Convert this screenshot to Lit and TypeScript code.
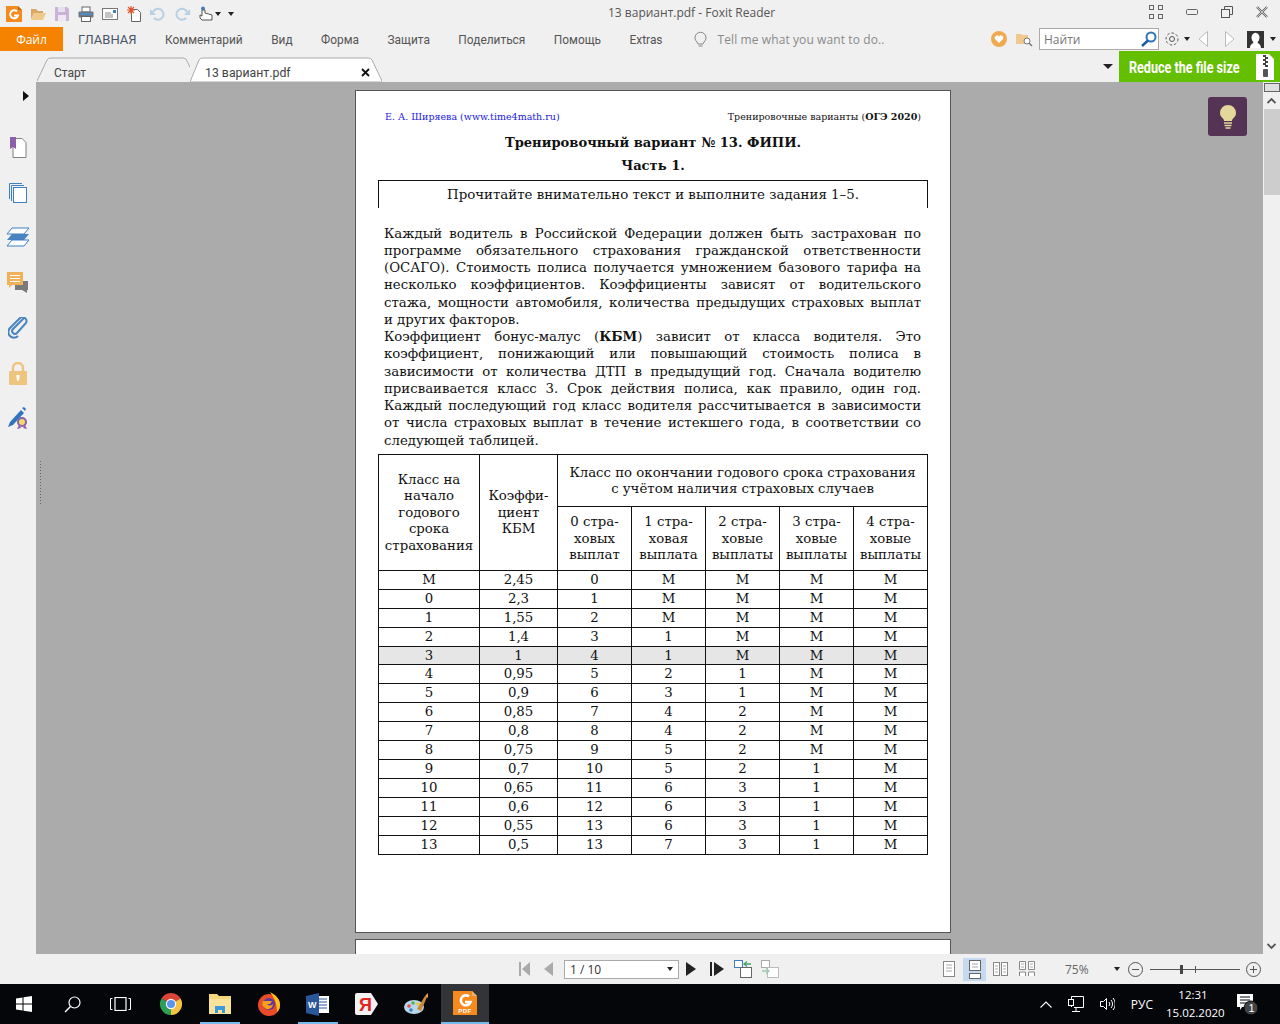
import { LitElement, html, css, svg } from 'lit';
import { customElement } from 'lit/decorators.js';

const icon = (w: number, h: number, body: unknown, cls = '') => html`<svg class="ic ${cls}" width=${w} height=${h} viewBox="0 0 ${w} ${h}">${body}</svg>`;

const foxitSmall = icon(16, 16, svg`
  <rect width="16" height="16" fill="#f58a1f"/>
  <path d="M12 0h4v4z" fill="#fff"/><path d="M12 0l4 4h-4z" fill="#b86a1a"/>
  <path d="M11 5.5a4 4 0 1 0 1 4H8" fill="none" stroke="#fff" stroke-width="2"/>`);

const foxitPdf = html`<svg class="ic" width="24" height="24" viewBox="0 0 24 24">
  <rect width="24" height="24" fill="#f58a1f"/>
  <path d="M19 0h5v5z" fill="#333438"/><path d="M19 0l5 5h-5z" fill="#e8b27a"/>
  <path d="M16 5.5a5 5 0 1 0 1.5 5.500H12" fill="none" stroke="#fff" stroke-width="2.6"/>
  <text x="12" y="22" text-anchor="middle" font-size="6" font-weight="700" fill="#fff" font-family="Liberation Sans" letter-spacing=".5">PDF</text>
</svg>`;

const qat = [
  foxitSmall,
  icon(16, 16, svg`<path d="M1 3h5l2 2h5v2H4L1 13z" fill="#d9a866"/><path d="M4 7h12l-3 7H1z" fill="#f0c98c"/>`),
  icon(16, 16, svg`<path d="M1 1h12l2 2v12H1z" fill="#c9b3d6"/><rect x="4" y="1" width="7" height="5" fill="#e8dff0"/><rect x="4" y="9" width="8" height="6" fill="#efe8f4"/>`),
  icon(16, 16, svg`<rect x="4" y="1" width="8" height="5" fill="#fff" stroke="#666"/><rect x="0.5" y="5.5" width="15" height="6" rx="1" fill="#6f7780"/><rect x="2" y="7" width="12" height="2" fill="#4f8bc4"/><rect x="3.5" y="10.5" width="9" height="5" fill="#fff" stroke="#666"/>`),
  icon(16, 16, svg`<rect x="0.5" y="2.5" width="15" height="11" fill="#fff" stroke="#777"/><rect x="11" y="4" width="3" height="3" fill="#3f7fbf"/><path d="M3 7h6M3 9h8M3 11h8" stroke="#888"/>`),
  icon(16, 16, svg`<path d="M5.5 3.5h6l3 3v9h-9z" fill="#fff" stroke="#666"/><path d="M5 0v8M1 4h8M2 1l6 6M8 1L2 7" stroke="#e2542b" stroke-width="1.2"/>`),
  icon(16, 16, svg`<path d="M4 12a5.5 5.5 0 1 0 -1-6" fill="none" stroke="#b9cfe2" stroke-width="2"/><path d="M0 3v6h6z" fill="#b9cfe2"/>`),
  icon(16, 16, svg`<path d="M12 12a5.5 5.5 0 1 1 1-6" fill="none" stroke="#b9cfe2" stroke-width="2"/><path d="M16 3v6h-6z" fill="#b9cfe2"/>`),
  icon(16, 16, svg`<circle cx="5" cy="2.5" r="2" fill="#3f7fbf"/><path d="M4 4v6L2 9v3l2 2h10v-5l-7-2V4z" fill="#fff" stroke="#555"/>`),
];

const sideIcons = [
  icon(18, 22, svg`<path d="M4 1.5h9l4 4v15H4z" fill="#fff" stroke="#808080"/><path d="M1 0h6v12l-3-2-3 2z" fill="#8c5fa8"/>`),
  icon(18, 22, svg`<path d="M0.5 17V1.5H13M2.5 19V3.5H15" fill="none" stroke="#3f7fc4"/><rect x="4.5" y="5.5" width="13" height="15" fill="#fff" stroke="#3f7fc4"/>`),
  icon(24, 20, svg`<path d="M6 1h17l-5 6H1z" fill="#fff" stroke="#3f7fc4"/><path d="M6 7h17l-5 6H1z" fill="#4a84c0"/><path d="M6 13h17l-5 6H1z" fill="#fff" stroke="#3f7fc4"/>`),
  icon(22, 22, svg`<rect x="8" y="9" width="13" height="9" fill="#7a7a7a"/><path d="M15 18h5v3z" fill="#7a7a7a"/><path d="M0 0h16v13H5l-3 3v-3H0z" fill="#efb25a"/><path d="M3 3.5h10M3 6.5h10M3 9.5h10" stroke="#fff"/>`),
  icon(20, 22, svg`<path d="M16 3l-11 11a2.5 2.5 0 0 0 4 4l9-10a4 4 0 0 0-6-5l-10 10a5.5 5.5 0 0 0 8 8" transform="translate(0 -2)" fill="none" stroke="#4a84c0" stroke-width="2"/>`),
  icon(18, 23, svg`<path d="M4 10V6a5 5 0 0 1 10 0v4" fill="none" stroke="#efc47f" stroke-width="2.5"/><rect y="9" width="18" height="14" rx="1" fill="#efc47f"/><path d="M7.5 13h3v3l-1 3h-1l-1-3z" fill="#fff"/>`),
  icon(20, 22, svg`<path d="M0 20l2-5L13 3l3 3L5 18z" fill="#2f74bd"/><path d="M14 1l2-1 2 2-1 2z" fill="#2f74bd"/><circle cx="14" cy="15" r="4" fill="#f2dd6c" stroke="#8c5fa8" stroke-width="2"/><path d="M11 18l-2 4 4-1M17 18l2 4-4-1" fill="#8c5fa8"/>`),
];

const rows = [
  ['М', '2,45', '0', 'М', 'М', 'М', 'М'],
  ['0', '2,3', '1', 'М', 'М', 'М', 'М'],
  ['1', '1,55', '2', 'М', 'М', 'М', 'М'],
  ['2', '1,4', '3', '1', 'М', 'М', 'М'],
  ['3', '1', '4', '1', 'М', 'М', 'М'],
  ['4', '0,95', '5', '2', '1', 'М', 'М'],
  ['5', '0,9', '6', '3', '1', 'М', 'М'],
  ['6', '0,85', '7', '4', '2', 'М', 'М'],
  ['7', '0,8', '8', '4', '2', 'М', 'М'],
  ['8', '0,75', '9', '5', '2', 'М', 'М'],
  ['9', '0,7', '10', '5', '2', '1', 'М'],
  ['10', '0,65', '11', '6', '3', '1', 'М'],
  ['11', '0,6', '12', '6', '3', '1', 'М'],
  ['12', '0,55', '13', '6', '3', '1', 'М'],
  ['13', '0,5', '13', '7', '3', '1', 'М'],
];

const para = [
  'Каждый водитель в Российской Федерации должен быть застрахован по',
  'программе обязательного страхования гражданской ответственности',
  '(ОСАГО). Стоимость полиса получается умножением базового тарифа на',
  'несколько коэффициентов. Коэффициенты зависят от водительского',
  'стажа, мощности автомобиля, количества предыдущих страховых выплат',
];
const para2 = [
  html`Коэффициент бонус-малус (<b>КБМ</b>) зависит от класса водителя. Это`,
  'коэффициент, понижающий или повышающий стоимость полиса в',
  'зависимости от количества ДТП в предыдущий год. Сначала водителю',
  'присваивается класс 3. Срок действия полиса, как правило, один год.',
  'Каждый последующий год класс водителя рассчитывается в зависимости',
  'от числа страховых выплат в течение истекшего года, в соответствии со',
];

const headCols = [
  ['0 стра-', 'ховых', 'выплат'],
  ['1 стра-', 'ховая', 'выплата'],
  ['2 стра-', 'ховые', 'выплаты'],
  ['3 стра-', 'ховые', 'выплаты'],
  ['4 стра-', 'ховые', 'выплаты'],
];

@customElement('app-root')
export class AppRoot extends LitElement {
  static styles = css`
    :host { display: block; width: 1280px; height: 1024px; overflow: hidden; background: #f0f0f0; font-family: "Open Sans", "Noto Sans", sans-serif; color: #444; }
    .ic { display: block; flex: none; }
    .title { height: 27px; display: flex; align-items: center; position: relative; padding-left: 6px; }
    .qat { display: flex; gap: 8px; align-items: center; }
    .mini { width: 0; height: 0; border: 3px solid transparent; border-top: 4px solid #222; border-bottom: 0; flex: none; }
    .qat .mini { margin-left: -7px; }
    .qat .mini + .mini { margin-left: -1px; }
    .doc-title { position: absolute; left: 608px; top: 5px; font-size: 12px; line-height: 16px; color: #555; white-space: nowrap; }
    .winbtns { margin-left: auto; display: flex; gap: 23px; align-items: center; padding: 0 12px 4px 0; }
    .menu { height: 24px; display: flex; align-items: center; font-size: 12px; color: #555; }
    .file { width: 63px; height: 24px; background: #f58200; color: #fff; display: flex; align-items: center; justify-content: center; margin-right: 15px; }
    .menu .items { display: flex; gap: 28.5px; align-items: center; font: 11.9px "Roboto", sans-serif; padding-top: 1px; }
    .home { font-size: 13px; color: #4a5568; }
    .tell { display: flex; align-items: center; gap: 9px; color: #8a8a8a; margin-left: 31px; letter-spacing: .1px; padding-top: 1px; }
    .menu-right { margin-left: auto; display: flex; align-items: center; padding-right: 4px; }
    .search { height: 20px; border: 1px solid #aaa; background: #fff; display: flex; align-items: center; justify-content: space-between; padding-left: 4px; box-sizing: content-box; margin: 0 5px 0 6px; color: #777; width: 114px; }
    .tabs { height: 31px; display: flex; position: relative; align-items: stretch; }
    .tab { position: relative; font: 12px/16px "Roboto", sans-serif; color: #444; padding-top: 14px; box-sizing: border-box; }
    .tab svg { position: absolute; left: 0; top: 0; }
    .tab span { position: relative; }
    .tab.start { width: 153px; margin-left: 37px; padding-left: 17px; }
    .tab.cur { width: 192px; margin-left: 0; padding-left: 15px; font-size: 12.3px; }
    .tab.cur svg.x { left: 171px; top: 17px; }
    .tabs-right { margin-left: auto; display: flex; align-items: center; }
    .green { width: 161px; height: 31px; margin-left: 6px; background: #64bf00; color: #fff; display: flex; align-items: center; justify-content: space-between; padding: 0 6px 0 10px; box-sizing: border-box; }
    .green b { display: block; font: 700 17px "Roboto", sans-serif; white-space: nowrap; transform: scaleX(.74); transform-origin: left center; width: 111px; }
    .main { height: 872px; display: flex; }
    .side { width: 36px; flex: none; display: flex; flex-direction: column; align-items: center; padding-top: 9px; box-sizing: border-box; }
    .tri { width: 0; height: 0; border: 5px solid transparent; border-left: 6px solid #111; border-right: 0; margin: 0 0 36px 16px; }
    .side .slot { height: 45px; display: flex; align-items: flex-start; justify-content: center; }
    .view { flex: 1; background: #ababab; overflow: hidden; position: relative; padding: 8px 0 0 319px; box-sizing: border-box; }
    .grip { position: absolute; left: 3px; top: 378px; width: 3px; height: 44px; background-image: radial-gradient(#666 .7px, transparent .9px); background-size: 3px 3px; }
    .bulb { position: absolute; left: 1172px; top: 15px; width: 39px; height: 39px; border-radius: 3px; background: #553355; display: flex; align-items: center; justify-content: center; }
    .page { width: 596px; background: #fff; border: 1px solid #555; box-sizing: border-box; font-family: "DejaVu Serif", serif; color: #111; }
    .page.one { height: 843px; padding: 0 22px; margin-bottom: 6px; }
    .page.two { height: 40px; }
    .hdr { display: flex; justify-content: space-between; padding: 20px 7px 0; font-size: 9.5px; line-height: 12px; }
    .hdr .l { color: #1a1ae0; }
    .h1 { text-align: center; font-weight: 700; font-size: 13.1px; line-height: 18px; margin-top: 11px; }
    .h2 { text-align: center; font-weight: 700; font-size: 13.1px; line-height: 18px; margin-top: 5px; }
    .box { border: 1px solid #111; border-bottom: 0; height: 28px; margin-top: 5px; width: 550px; box-sizing: border-box; text-align: center; font-size: 13.35px; line-height: 28px; }
    .txt { margin: 16.6px 7px 0 6px; font-size: 13.3px; line-height: 17.25px; width: 537px; }
    .txt span { display: block; text-align: justify; text-align-last: justify; white-space: nowrap; }
    .txt span.end { text-align-last: left; }
    table { border-collapse: collapse; table-layout: fixed; width: 550px; margin-top: 4.8px; font-size: 13.3px; text-align: center; }
    td, th { border: 1px solid #111; padding: 0; font-weight: 400; overflow: hidden; white-space: nowrap; }
    th { line-height: 16.6px; padding-top: 2px; }
    .h-a { height: 52px; }
    .h-b { height: 64px; }
    tbody td { height: 18px; line-height: 18px; }
    tbody tr.hl td { background: #e6e6e6; height: 17px; line-height: 17px; }
    .c1 { width: 101px; } .c2 { width: 78px; } .c3 { width: 74px; }
    .scroll { width: 17px; flex: none; background: #f0f0f0; display: flex; flex-direction: column; align-items: stretch; }
    .split { height: 9px; margin: 1px 0 0 1px; background: #e0e0e0; border: 1px solid #666; box-sizing: border-box; }
    .sa { height: 17px; display: flex; align-items: center; justify-content: center; }
    .thumb { height: 86px; margin-left: 1px; background: #cdcdcd; }
    .sp { flex: 1; }
    .status { height: 30px; display: flex; align-items: center; position: relative; font-size: 12px; }
    .nav { display: flex; align-items: center; margin-left: 518px; }
    .select { height: 17px; border: 1px solid #aaa; background: #fff; display: flex; align-items: center; justify-content: space-between; padding: 0 5px; box-sizing: content-box; width: 103px; margin: 0 7px 0 11px; color: #333; }
    .layouts { margin-left: 158px; display: flex; align-items: center; gap: 3px; }
    .lay { width: 23px; height: 23px; display: flex; align-items: center; justify-content: center; }
    .lay.on { background: #c5d9f1; }
    .pct { margin-left: 27px; width: 49px; color: #666; }
    .zoomline { width: 90px; height: 1px; background: #555; position: relative; margin: 0 6px 0 7px; }
    .zoomline i { position: absolute; left: 30px; top: -4px; width: 3px; height: 9px; background: #444; }
    .zoomline u { position: absolute; left: 45px; top: -3px; width: 1px; height: 7px; background: #555; }
    .taskbar { height: 40px; background: #05060a; display: flex; align-items: center; color: #fff; position: relative; }
    .tb { width: 49px; height: 40px; display: flex; align-items: center; justify-content: center; flex: none; box-sizing: border-box; }
    .tb.sys { width: 48px; }
    .tb.chrome { margin-left: 2px; }
    .tb.run { background: linear-gradient(#76b9ed, #76b9ed) center bottom / 40px 2px no-repeat; }
    .tb.cur { width: 48px; margin-left: 1px; background: #333438; border-bottom: 2px solid #76b9ed; }
    .tray { margin-left: auto; display: flex; align-items: center; font-size: 12px; padding-right: 22px; }
    .clock { text-align: center; margin: 0 17px 0 13px; line-height: 18px; font-size: 11.5px; width: 54px; }
  `;

  render() {
    return html`
      <div class="title">
        <div class="qat">${qat}<i class="mini"></i><i class="mini"></i></div>
        <div class="doc-title">13 вариант.pdf - Foxit Reader</div>
        <div class="winbtns">
          ${icon(14, 14, svg`<g fill="none" stroke="#666"><rect x=".5" y=".5" width="4" height="4"/><rect x="9.5" y=".5" width="4" height="4"/><rect x=".5" y="9.5" width="4" height="4"/><rect x="9.5" y="9.5" width="4" height="4"/></g>`)}
          ${icon(12, 6, svg`<rect x=".5" y=".5" width="11" height="5" rx="1" fill="none" stroke="#666"/>`)}
          ${icon(12, 12, svg`<g fill="none" stroke="#555"><rect x=".5" y="3.5" width="8" height="8"/><path d="M3.5 3V.5h8v8H9"/></g>`)}
          ${icon(12, 12, svg`<path d="M1 1l10 10M11 1L1 11" stroke="#666" stroke-width="2.2"/><path d="M1 1l10 10M11 1L1 11" stroke="#f0f0f0" stroke-width=".7"/>`)}
        </div>
      </div>
      <div class="menu">
        <div class="file">Файл</div>
        <div class="items">
          <span class="home">ГЛАВНАЯ</span><span>Комментарий</span><span>Вид</span><span>Форма</span><span>Защита</span><span>Поделиться</span><span>Помощь</span><span>Extras</span>
        </div>
        <div class="tell">
          ${icon(15, 17, svg`<path d="M4 11a5.5 5.5 0 1 1 7 0l-1 2H5zM5.5 15h4" fill="none" stroke="#888"/>`)}
          <span>Tell me what you want to do..</span>
        </div>
        <div class="menu-right">
          ${icon(16, 16, svg`<circle cx="8" cy="8" r="8" fill="#efa94f"/><path d="M8 12L4 8a2.2 2.2 0 0 1 4-2.5a2.2 2.2 0 0 1 4 2.5z" fill="#fff"/>`)}
          <span style="width:9px"></span>
          ${icon(17, 16, svg`<path d="M0 3h5l1 1h6v9H0z" fill="#f0c98c"/><circle cx="11" cy="10" r="3" fill="#fff" stroke="#777"/><path d="M13 12l3 3" stroke="#777" stroke-width="1.5"/>`)}
          <div class="search"><span>Найти</span>${icon(18, 18, svg`<circle cx="11" cy="7" r="4.5" fill="#fff" stroke="#2f74bd" stroke-width="2"/><path d="M8 10.5L2 16" stroke="#1d5c9e" stroke-width="2.5"/>`)}</div>
          ${icon(16, 16, svg`<circle cx="8" cy="8" r="2.5" fill="none" stroke="#555"/><circle cx="8" cy="8" r="6" fill="none" stroke="#555" stroke-dasharray="2.5 2"/>`)}
          <i class="mini" style="margin:0 8px 0 4px"></i>
          ${icon(10, 16, svg`<path d="M9.5 .5v15L1 8z" fill="#fff" stroke="#bbb"/>`)}
          <span style="width:17px"></span>
          ${icon(10, 16, svg`<path d="M.5 .5v15L9 8z" fill="#fff" stroke="#bbb"/>`)}
          <span style="width:12px"></span>
          ${icon(17, 17, svg`<rect width="17" height="17" fill="#333"/><path d="M3 17c0-4 3-4 3.5-6a4 5 0 1 1 4 0c.5 2 3.5 2 3.5 6z" fill="#fff"/>`)}
          <i class="mini" style="margin-left:6px"></i>
        </div>
      </div>
      <div class="tabs">
        <div class="tab start">
          <svg width="153" height="31"><path d="M0 30L10 9Q11 7 14 7H146Q149 7 150 10L155 20" fill="#f0f0f0" stroke="#aaa"/></svg>
          <span>Старт</span>
        </div>
        <div class="tab cur">
          <svg width="192" height="31"><path d="M0 31L9 9Q10 7 13 7H178Q181 7 182 9L192 30V31Z" fill="#fff" stroke="#aaa"/></svg>
          <span>13 вариант.pdf</span>
          ${icon(9, 9, svg`<path d="M1 1l7 7M8 1L1 8" stroke="#111" stroke-width="1.8"/>`, 'x')}
        </div>
        <div class="tabs-right">
          <i class="mini" style="border-width:5px 5px 0;margin:0"></i>
          <div class="green">
            <b>Reduce the file size</b>
            ${icon(18, 26, svg`<path d="M0 0h13l5 5v21H0z" fill="#fff"/><path d="M7 1h3v2H7zM9 3h3v2H9zM7 5h3v2H7zM9 7h3v2H9zM7 9h3v2H7zM9 11h3v2H9z" fill="#444"/><rect x="7" y="15" width="5" height="8" rx="1" fill="#555"/>`)}
          </div>
        </div>
      </div>
      <div class="main">
        <div class="side">
          <div class="tri"></div>
          ${sideIcons.map((i) => html`<div class="slot">${i}</div>`)}
        </div>
        <div class="view">
          <div class="grip"></div>
          <div class="page one">
            <div class="hdr"><span class="l">Е. А. Ширяева (www.time4math.ru)</span><span>Тренировочные варианты (<b>ОГЭ 2020</b>)</span></div>
            <div class="h1">Тренировочный вариант № 13. ФИПИ.</div>
            <div class="h2">Часть 1.</div>
            <div class="box">Прочитайте внимательно текст и выполните задания 1–5.</div>
            <div class="txt">
              ${para.map((l) => html`<span>${l}</span>`)}
              <span class="end">и других факторов.</span>
              ${para2.map((l) => html`<span>${l}</span>`)}
              <span class="end">следующей таблицей.</span>
            </div>
            <table>
              <colgroup><col class="c1"><col class="c2"><col class="c3"><col class="c3"><col class="c3"><col class="c3"><col class="c3"></colgroup>
              <thead>
                <tr class="h-a">
                  <th rowspan="2">Класс на<br>начало<br>годового<br>срока<br>страхования</th>
                  <th rowspan="2">Коэффи-<br>циент<br>КБМ</th>
                  <th colspan="5">Класс по окончании годового срока страхования<br>с учётом наличия страховых случаев</th>
                </tr>
                <tr class="h-b">${headCols.map((c) => html`<th>${c[0]}<br>${c[1]}<br>${c[2]}</th>`)}</tr>
              </thead>
              <tbody>
                ${rows.map((r, i) => html`<tr class=${i === 4 ? 'hl' : ''}>${r.map((v) => html`<td>${v}</td>`)}</tr>`)}
              </tbody>
            </table>
          </div>
          <div class="page two"></div>
          <div class="bulb">${icon(16, 24, svg`<path d="M4 16c0-3-4-3.5-4-8a8 8 0 0 1 16 0c0 4.5-4 5-4 8z" fill="#e3d89a"/><path d="M4 18h8M4.5 20.5h7M5.5 23h5" stroke="#e3d89a" stroke-width="1.5"/>`)}</div>
        </div>
        <div class="scroll">
          <div class="split"></div>
          <div class="sa">${icon(9, 6, svg`<path d="M.5 5L4.5 1l4 4" fill="none" stroke="#555" stroke-width="1.8"/>`)}</div>
          <div class="thumb"></div>
          <div class="sp"></div>
          <div class="sa">${icon(9, 6, svg`<path d="M.5 1l4 4 4-4" fill="none" stroke="#555" stroke-width="1.8"/>`)}</div>
        </div>
      </div>
      <div class="status">
        <div class="nav">
          ${icon(13, 16, svg`<path d="M2 1v14" stroke="#aaa" stroke-width="2"/><path d="M12 1v14L4 8z" fill="#aaa"/>`)}
          <span style="width:13px"></span>
          ${icon(9, 16, svg`<path d="M9 1v14L0 8z" fill="#aaa"/>`)}
          <div class="select"><span>1 / 10</span><i class="mini"></i></div>
          ${icon(10, 16, svg`<path d="M0 1v14l10-7z" fill="#222"/>`)}
          <span style="width:14px"></span>
          ${icon(14, 16, svg`<path d="M1 1v14" stroke="#222" stroke-width="2"/><path d="M4 1v14l10-7z" fill="#222"/>`)}
          <span style="width:10px"></span>
          ${icon(18, 18, svg`<rect x=".5" y=".5" width="8" height="7" fill="#fff" stroke="#3f7fc4"/><rect x="6.5" y="7.5" width="11" height="10" fill="#fff" stroke="#666"/><path d="M17 4H10M13 1.5L10 4l3 2.5" fill="none" stroke="#4aa36b" stroke-width="1.3"/>`)}
          <span style="width:9px"></span>
          ${icon(18, 18, svg`<rect x=".5" y=".5" width="8" height="7" fill="#fff" stroke="#aaa"/><rect x="6.5" y="7.5" width="11" height="10" fill="#fff" stroke="#bbb"/><path d="M1 11h7M5 8.5L8 11l-3 2.5" fill="none" stroke="#9cc9ae" stroke-width="1.3"/>`)}
        </div>
        <div class="layouts">
          <div class="lay">${icon(12, 16, svg`<rect x=".5" y=".5" width="11" height="15" fill="#fff" stroke="#888"/><path d="M3 4h6M3 7h6M3 10h6" stroke="#aaa"/>`)}</div>
          <div class="lay on">${icon(12, 19, svg`<rect x=".5" y=".5" width="11" height="10" fill="#fff" stroke="#666"/><rect x=".5" y="13.5" width="11" height="5" fill="#fff" stroke="#666"/><path d="M3 4h6M3 7h6" stroke="#aaa"/>`)}</div>
          <div class="lay">${icon(15, 14, svg`<rect x=".5" y=".5" width="6" height="13" fill="#fff" stroke="#888"/><rect x="8.5" y=".5" width="6" height="13" fill="#fff" stroke="#888"/><path d="M2 4h3M2 7h3M2 10h3M10 4h3M10 7h3M10 10h3" stroke="#aaa"/>`)}</div>
          <div class="lay">${icon(16, 16, svg`<path d="M.5 .5h6v8h-6zM9.5 .5h6v8h-6zM.5 15v-4h6v4M9.5 15v-4h6v4" fill="#fff" stroke="#888"/><path d="M2 3h3M2 6h3M11 3h3M11 6h3" stroke="#aaa"/>`)}</div>
        </div>
        <span class="pct">75%</span>
        <i class="mini" style="margin-right:8px"></i>
        ${icon(15, 15, svg`<circle cx="7.5" cy="7.5" r="7" fill="none" stroke="#555"/><path d="M4 7.5h7" stroke="#555"/>`)}
        <div class="zoomline"><i></i><u></u></div>
        ${icon(15, 15, svg`<circle cx="7.5" cy="7.5" r="7" fill="none" stroke="#555"/><path d="M4 7.5h7M7.5 4v7" stroke="#555"/>`)}
      </div>
      <div class="taskbar">
        <div class="tb sys">${icon(16, 16, svg`<path d="M0 2.5l6.5-1v6H0zM7.5 1.300L16 0v7.5H7.5zM0 8.5h6.5v6l-6.5-1zM7.5 8.5H16V16l-8.5-1.300z" fill="#fff"/>`)}</div>
        <div class="tb sys">${icon(17, 17, svg`<circle cx="10.5" cy="6.5" r="5.5" fill="none" stroke="#fff" stroke-width="1.2"/><path d="M6.5 10.5L1 16" stroke="#fff" stroke-width="1.4"/>`)}</div>
        <div class="tb sys">${icon(21, 14, svg`<rect x="5" y=".5" width="11" height="13" fill="none" stroke="#fff" stroke-width="1.2"/><path d="M2.5 1.5H.5v11h2M18.5 1.5h2v11h-2" fill="none" stroke="#fff"/>`)}</div>
        <div class="tb chrome">${icon(22, 22, svg`<path d="M11 11L1.47 5.5A11 11 0 0 1 20.53 5.5z" fill="#db4437"/><path d="M11 11L20.53 5.5A11 11 0 0 1 11 22z" fill="#f4c33f"/><path d="M11 11L11 22A11 11 0 0 1 1.47 5.5z" fill="#2f9e55"/><circle cx="11" cy="11" r="5.2" fill="#fff"/><circle cx="11" cy="11" r="4" fill="#5b93ee"/>`)}</div>
        <div class="tb run">${icon(22, 20, svg`<path d="M0 0h8l2 2h12v18H0z" fill="#f5d67b"/><rect y="5" width="22" height="15" fill="#f9e39a"/><path d="M6 19v-7h10v7h-3v-3H9v3z" fill="#3a9bdc"/>`)}</div>
        <div class="tb">${icon(22, 24, svg`<circle cx="11" cy="13" r="11" fill="#ea4b2a"/><path d="M12 0c6 3 10 7 10 13 0 3-1 5-3 7 0-6-1-12-7-20z" fill="#ffc21c"/><circle cx="11" cy="12" r="6" fill="#5a3a9e"/><path d="M5 9h9l-2 3H9c2 2 4 2 6 0 0 4-5 7-8 4-3-2-3-5-2-7z" fill="#f9a01b"/>`)}</div>
        <div class="tb run">${icon(23, 23, svg`<rect x="8" y="3" width="15" height="17" fill="#fff"/><path d="M12 6h9M12 9h9M12 12h9M12 15h9" stroke="#2b579a"/><path d="M0 3l13-3v23L0 20z" fill="#2b579a"/><text x="2" y="15" font-size="9" font-weight="700" fill="#fff" font-family="Liberation Sans">W</text>`)}</div>
        <div class="tb">${icon(23, 22, svg`<path d="M2 0h14l7 11-7 11H2a2 2 0 0 1-2-2V2a2 2 0 0 1 2-2z" fill="#f2f2f2"/><text x="4" y="18" font-size="18" font-weight="700" fill="#e5231f" font-family="Liberation Sans">Я</text>`)}</div>
        <div class="tb">${icon(24, 22, svg`<ellipse cx="10" cy="14" rx="10" ry="7" fill="#b8d7e8"/><circle cx="5" cy="13" r="1.8" fill="#e34f4f"/><circle cx="9" cy="10" r="1.8" fill="#5bb14f"/><circle cx="14" cy="11" r="1.8" fill="#f0c33c"/><circle cx="7" cy="17" r="1.8" fill="#3f7fc4"/><path d="M13 16L21 3l2 1-6 14z" fill="#c88a3a"/><path d="M21 3l3-3v5z" fill="#e8a24f"/>`)}</div>
        <div class="tb cur">${foxitPdf}</div>
        <div class="tray">
          ${icon(12, 7, svg`<path d="M.5 6.5L6 1l5.5 5.5" fill="none" stroke="#fff" stroke-width="1.1"/>`)}
          <span style="width:16px"></span>
          ${icon(16, 16, svg`<path d="M3.5 11V.5h12v11H6M8 11v4M4 15.5h8" fill="none" stroke="#fff"/><rect x=".5" y="3.5" width="5" height="6" fill="#05060a" stroke="#fff"/>`)}
          <span style="width:16px"></span>
          ${icon(15, 14, svg`<path d="M.5 4.5h3l3-3v11l-3-3h-3z" fill="none" stroke="#fff"/><path d="M9 5a3 3 0 0 1 0 4M11 3a6 6 0 0 1 0 8M13 1a9 9 0 0 1 0 12" fill="none" stroke="#fff"/>`)}
          <span style="width:16px"></span>
          <span>РУС</span>
          <div class="clock">12:31<br>15.02.2020</div>
          ${icon(21, 22, svg`<path d="M0 1h16v13H5l-2 3v-3H0z" fill="#fff"/><path d="M3 4h10M3 7h10M3 10h7" stroke="#05060a"/><circle cx="14" cy="15" r="7" fill="#444" stroke="#05060a"/><text x="11.5" y="19" font-size="11" fill="#fff" font-family="Liberation Sans">1</text>`)}
        </div>
      </div>
    `;
  }
}
